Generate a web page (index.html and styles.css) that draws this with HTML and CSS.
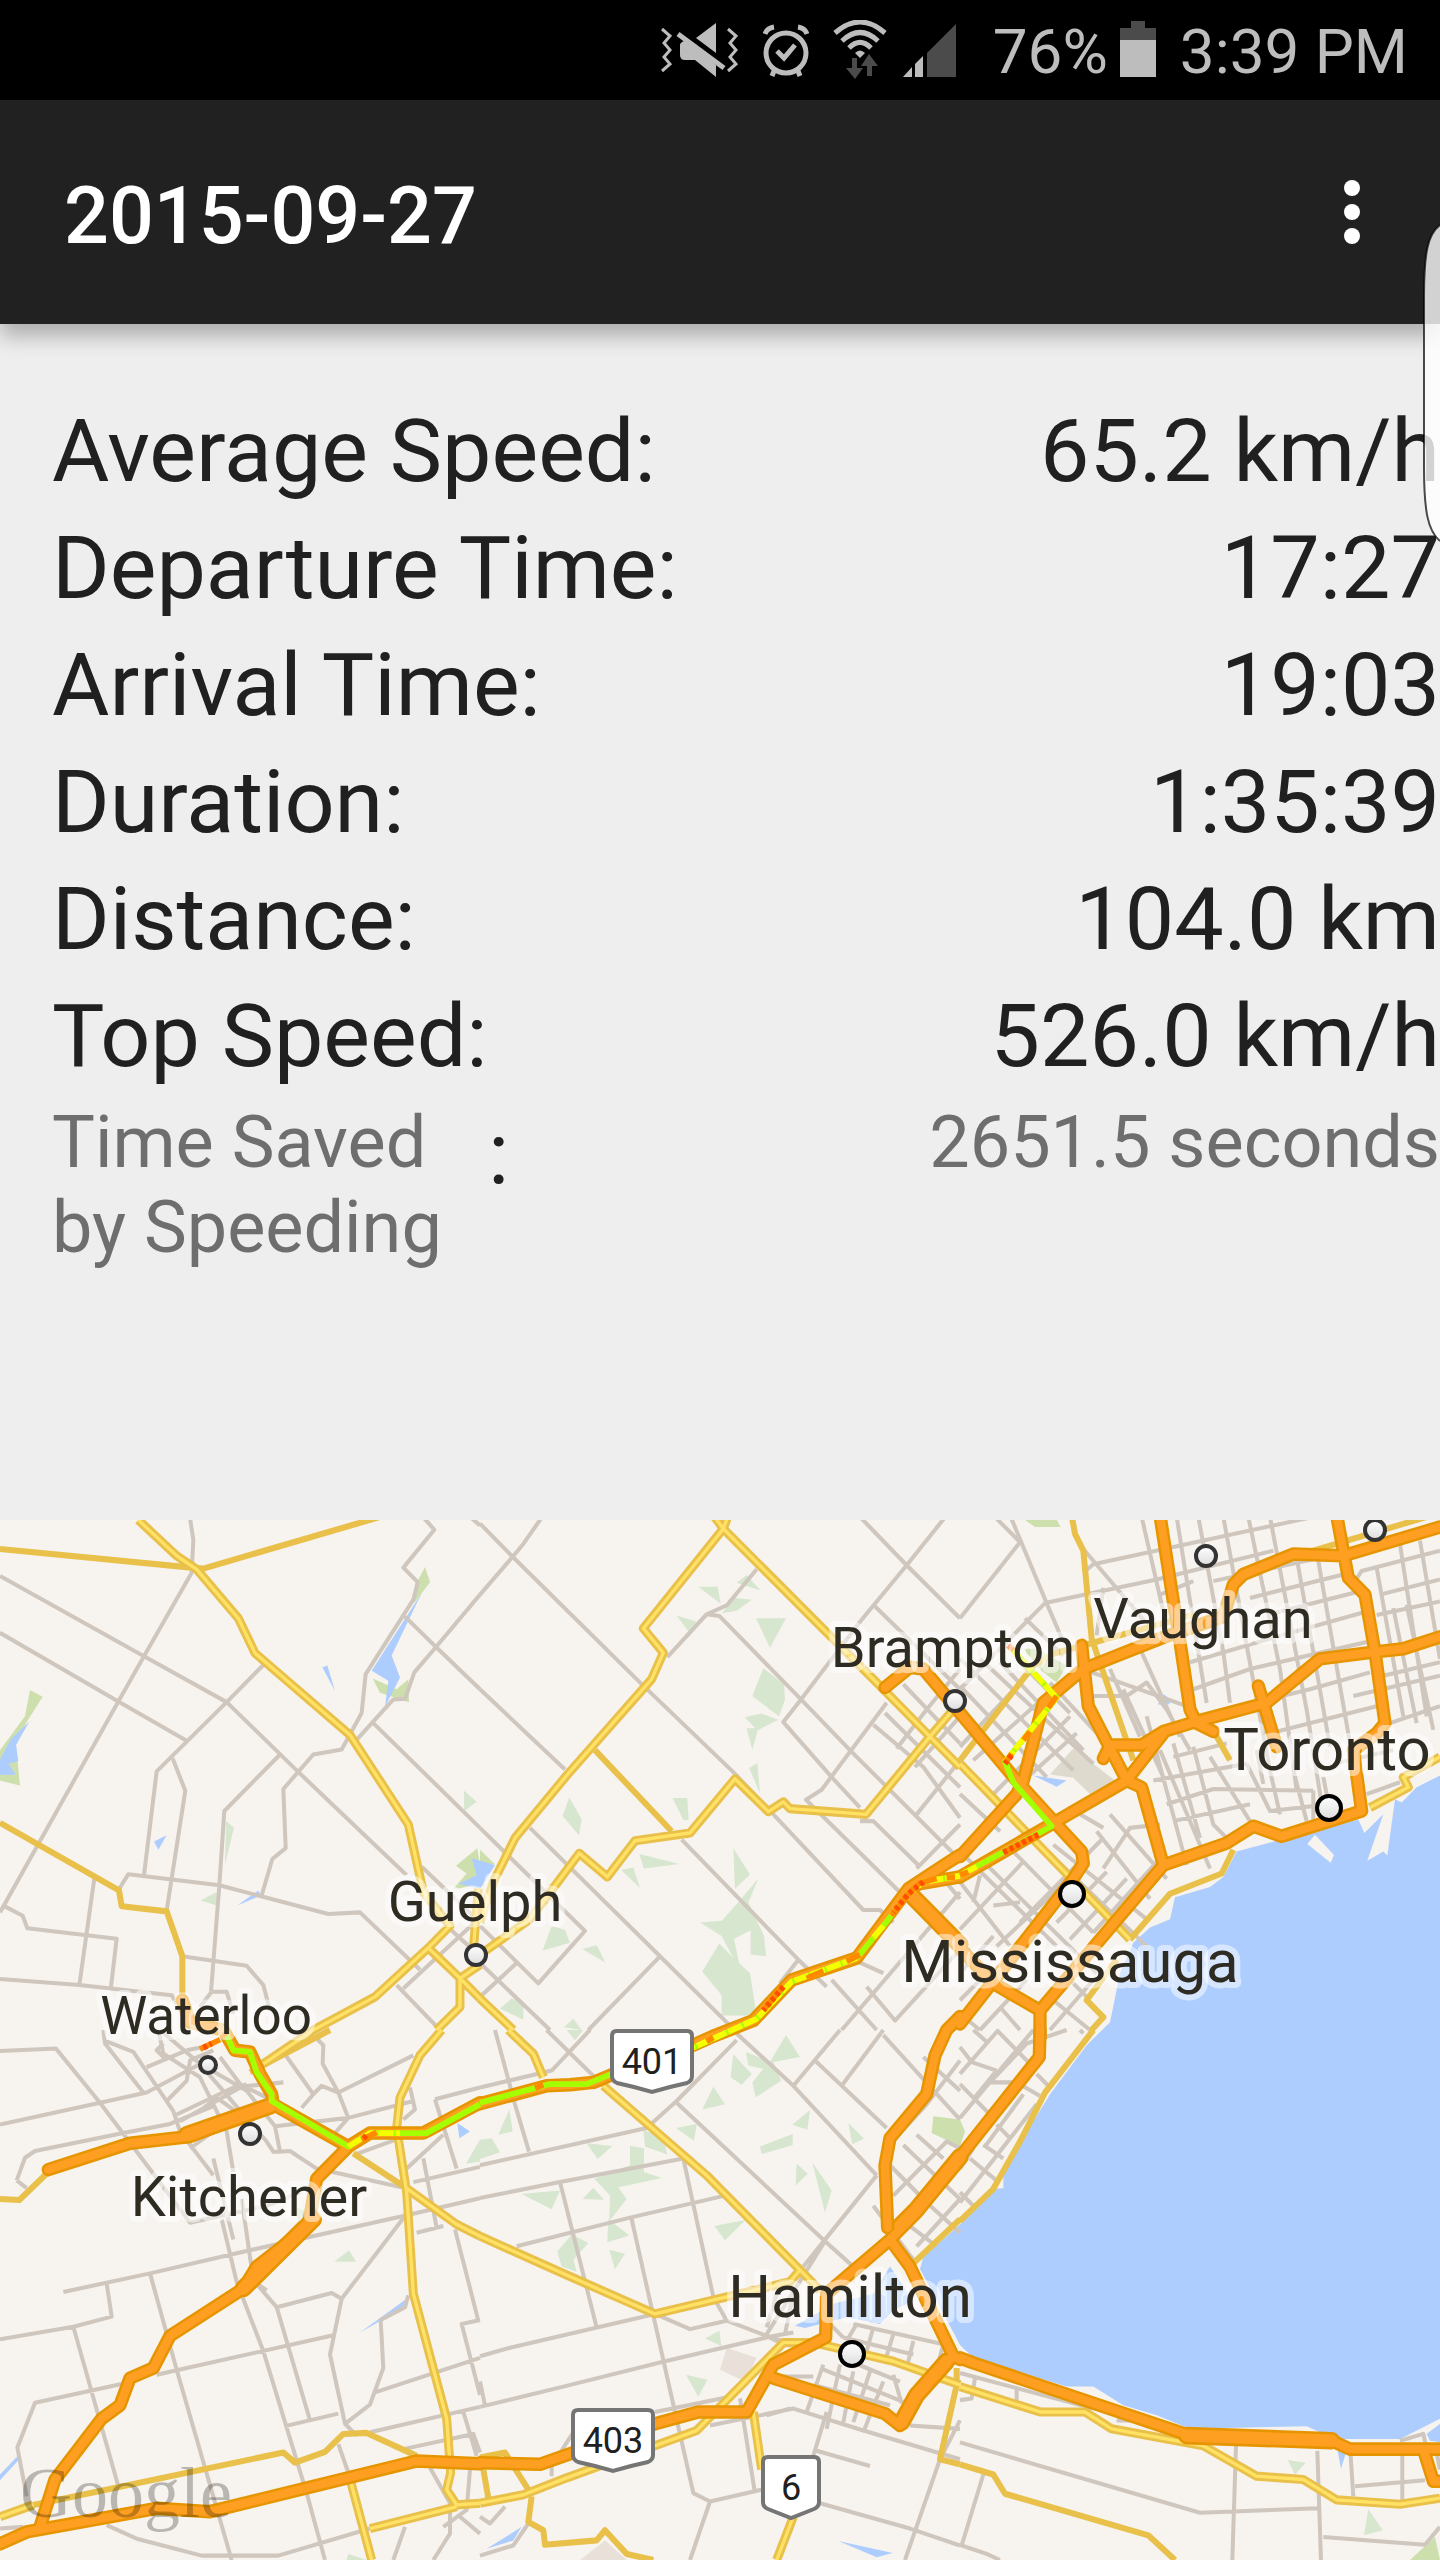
FILE: index.html
```html
<!DOCTYPE html>
<html lang="en">
<head>
<meta charset="utf-8">
<meta name="viewport" content="width=device-width, initial-scale=1">
<title>2015-09-27</title>
<link rel="stylesheet" href="styles.css">
</head>
<body>
<div class="status-bar">
  <svg class="status-icon" width="78" height="60" viewBox="0 0 78 60" role="img" aria-label="Vibrate">
    <path class="line thin" d="M1 9L9 16L3 23L9 30L3 37L9 44L1 51M67 9L75 16L69 23L75 30L69 37L75 44L67 51"/>
    <path class="lit" d="M55 3V33L35 18ZM26 20L55 45V57L34 40H24Q19 40 19 35V25Q19 22 26 20Z"/>
    <path class="gap" d="M20 10L66 45"/>
    <path class="line" d="M17 14L63 48"/>
  </svg>
  <svg class="status-icon" width="46" height="60" viewBox="0 0 46 60" role="img" aria-label="Alarm">
    <circle class="line" cx="23" cy="33" r="20"/>
    <path class="line" d="M14 31L21 38L32 25M2 14Q4 8 11 7M44 14Q42 8 35 7M11 51L9 56M35 51L37 56"/>
  </svg>
  <div class="network">
    <svg class="status-icon" width="54" height="60" viewBox="0 0 54 60" role="img" aria-label="Wi-Fi">
      <path class="line" d="M2 13Q27 -9 52 13M9 21Q27 4 45 21M16 28Q27 17 38 28"/>
      <path class="lit" d="M22 33Q27 28 32 33L27 38Z"/>
      <path class="dim" d="M19 38H24V48H30L22 59L13 48H19ZM34 56V46H28L36 34L45 46H39V56Z"/>
    </svg>
    <svg class="status-icon" width="54" height="60" viewBox="0 0 54 60" role="img" aria-label="Signal">
      <path class="lit" d="M0 57L9 47V57ZM12 57V44L20 36V57Z"/>
      <path class="dim" d="M24 57V33L53 4V57Z"/>
    </svg>
  </div>
  <div class="battery">
    <span class="status-text">76%</span>
    <svg class="status-icon" width="36" height="60" viewBox="0 0 36 60" role="img" aria-label="Battery">
      <path class="dim" d="M11 1H25V8H36V20H0V8H11Z"/>
      <path class="lit" d="M0 20H36V57H0Z"/>
    </svg>
  </div>
  <span class="status-text">3:39 PM</span>
</div>

<header class="app-bar">
  <h1 class="title">2015-09-27</h1>
  <button class="menu-button" type="button" aria-label="More options">
    <svg width="16" height="64" viewBox="0 0 16 64"><circle cx="8" cy="8" r="8"/><circle cx="8" cy="32" r="8"/><circle cx="8" cy="56" r="8"/></svg>
  </button>
  <svg class="edge-handle" width="20" height="322" viewBox="0 0 20 322" aria-hidden="true">
    <path class="edge-fill" d="M20 3C8 12 4 30 4 75V245C4 290 8 309 20 319Z"/>
    <path class="edge-line" d="M20 3C8 12 4 30 4 75V245C4 290 8 309 20 319"/>
  </svg>
</header>

<main>
  <section class="stats">
    <table class="stats-table">
      <tr><th scope="row">Average Speed:</th><td>65.2 km/h</td></tr>
      <tr><th scope="row">Departure Time:</th><td>17:27</td></tr>
      <tr><th scope="row">Arrival Time:</th><td>19:03</td></tr>
      <tr><th scope="row">Duration:</th><td>1:35:39</td></tr>
      <tr><th scope="row">Distance:</th><td>104.0 km</td></tr>
      <tr><th scope="row">Top Speed:</th><td>526.0 km/h</td></tr>
      <tr><th scope="row"><span class="saved-label"><span class="minor-text saved-name">Time Saved by Speeding</span><span>:</span></span></th><td><span class="minor-text">2651.5 seconds</span></td></tr>
    </table>
  </section>

  <svg class="map" viewBox="0 1520 1440 1040" role="img" aria-label="Map of the trip from Waterloo to Brampton">
    <defs>
      <linearGradient id="pin" x1="0" y1="0" x2="0" y2="1"><stop offset="0" stop-color="#fff"/><stop offset="1" stop-color="#ddd"/></linearGradient>
      <g id="arterial">
        <path d="M415 59L530 165L590 205L715 350L765 453L1050 695L1225 960L1270 1160L1350 1260L1285 1325L1125 1470L940 1568L790 1668M1285 1325L1380 1415L1440 1475M1440 1375L1380 1415V1500L1310 1568M1435 1150L1420 1330"/>
        <path transform="translate(1440 0)" d="M700 45L730 85L490 380L550 452L515 530L260 815L105 1000L40 1130L0 1250M745 45L730 85L1210 560L1350 700L1440 790M0 1345L150 1240L298 1045L382 1115L465 1008L630 985L765 825L865 922L910 893L930 913L1158 930L1350 700L1420 620M0 1475L100 1568"/>
        <path transform="translate(2880 0)" d="M0 780L510 1300M1230 910L1345 850L1330 820L1440 760"/>
        <path transform="translate(0 1568)" d="M1325 0L1260 75L1200 200L1190 290L1220 480L1240 780L1340 1150L1352 1310L1340 1360L1370 1405L1440 1400M1215 465L1370 575L1440 610M1110 1475L1370 1410M1045 1310L1115 1568M0 1440L100 1405"/>
        <path transform="translate(1440 1568)" d="M85 0L160 70L190 140M370 165L680 430L960 710L1020 770M960 710L930 745L525 840L260 725L0 610M0 1400L130 1375L260 1325L650 1185L910 925H1000L1240 980L1440 1050M820 1130L845 1300M940 1440L890 1568"/>
        <path transform="translate(2880 1568)" d="M0 1055L240 1130H375L455 1180L730 1230L890 1320L1030 1330L1130 1390L1320 1403L1440 1385"/>
      </g>
      <g id="highway">
        <path d="M547 1480L570 1545L670 1568"/>
        <path transform="translate(1440 0)" d="M1215 555L1290 495L1330 500L1440 630M1440 1050L1400 1075L1285 1150L1130 1355L935 1420L820 1540L700 1586L640 1613M1285 1150L1320 1135L1440 1115"/>
        <path transform="translate(2880 0)" d="M0 630L170 830L290 960L365 1040L370 1075L340 1120L0 1550M0 1055L170 870L190 830L250 600L370 500L600 410L790 345L820 250L850 220L1000 160L1150 165L1440 80M365 430L385 610L500 830L545 850L610 1080M600 45L640 300L660 420L690 620L710 660M1130 45L1165 230L1215 280L1245 450L1275 660L1250 690L1180 740L1205 920M430 765L450 725L545 725L610 685L710 655L920 600L1080 470L1240 450L1330 440L1440 405M610 690L500 830L290 950L0 1115M895 550L950 730M710 660L760 685M1205 920L965 995L880 965L800 1015L610 1080L240 1510V1590M-150 1170L100 1430L240 1510"/>
        <path transform="translate(0 1568)" d="M145 413L390 335L570 315L820 220M670 0L705 60L750 65L780 130L815 190L820 220L1045 345L1110 305H1270L1440 215M1045 345L950 440L925 580L770 700L730 765L510 905L460 1000L390 1030L360 1110L305 1150L165 1330L120 1470M0 1520L80 1485L470 1415L630 1425L1250 1275L1440 1283"/>
        <path transform="translate(1440 1568)" d="M1440 -40L1400 0L1365 75L1340 190L1230 320L1215 400L1223 585M0 218L200 165L270 162L340 155L450 110M1440 380L1310 540L1230 620L1040 780L1037 910L880 990L800 1130H655L525 1165L180 1285L0 1280M1230 620L1290 700L1420 965L1310 1080L1260 1170L1215 1135L880 1030M1420 965L1440 975"/>
        <path transform="translate(2880 1568)" d="M240 0L238 80L0 375M0 970L40 985L690 1200L1115 1215L1170 1240H1450M1390 1240L1420 1335H1450"/>
      </g>
      <g id="wide-highway">
        <path transform="translate(1440 0)" d="M1300 1175L1440 1315"/>
        <path transform="translate(0 1568)" d="M560 310L810 225M940 560L730 765"/>
        <path transform="translate(1440 1568)" d="M1440 375L1310 530L1260 580M1400 980L1310 1080L1265 1160"/>
        <path transform="translate(2880 1568)" d="M680 1200L1115 1215"/>
      </g>
      <g id="trip">
        <path transform="translate(2880 0)" d="M150 435L290 585L135 775L160 835L275 965L190 1010L0 1110"/>
        <path transform="translate(1440 0)" d="M1440 1112L1330 1130L1285 1165L1210 1260L1130 1355L935 1425L830 1535L640 1620"/>
        <path transform="translate(1440 1568)" d="M395 130L320 160H210L0 215"/>
        <path transform="translate(0 1568)" d="M675 5L700 60L750 65L770 125L815 190V210L960 295L1045 345L1110 305H1280L1440 220"/>
      </g>
    </defs>

    <rect class="land" x="0" y="1520" width="1440" height="1040"/>
    <g transform="translate(0 1500) scale(.33333 .33801)">
      <g class="woods">
        <path d="M1392 860L1430 893L1392 920ZM678 950L702 970L675 1080ZM602 1185L650 1160V1200Z"/>
        <path transform="translate(1440 0)" d="M655 257H713L722 307ZM725 335L765 290L815 295L770 328ZM770 245L800 222L842 268ZM590 342L650 360L625 388ZM828 350H918L870 437ZM850 498L912 545L915 590L897 640L817 580ZM795 643L845 632L895 650L832 682ZM800 675H835L817 738ZM808 793L832 778L840 868ZM578 882H622L626 947H610ZM268 880L305 945L297 992L248 935ZM478 1047L598 1077L492 1090ZM424 1095L460 1087L480 1148ZM760 1030L810 1108L765 1150ZM835 1120L805 1190L852 1290L858 1350L812 1345V1273L762 1298L777 1370L810 1400L830 1525H725V1465L667 1395L718 1312L760 1355L725 1290L660 1250L725 1245L775 1190ZM215 1260L255 1272L270 1310L188 1333ZM307 1328L350 1317L376 1368ZM60 1505L95 1475L130 1485V1537ZM252 1560L280 1535L305 1568Z"/>
        <path transform="translate(1440 1568)" d="M260 0H310L285 30ZM55 310L88 235L98 300ZM0 325L35 320L60 362L0 382ZM760 72L815 130L785 162L752 140ZM798 65L870 95L918 15L960 80L880 95L903 150L827 200L817 155L850 115L805 105ZM667 235L700 168L735 220ZM588 290L650 278L642 328ZM490 295L550 320L562 368L495 345ZM320 335L397 343L353 382ZM450 343L492 350V420L545 438L415 465L440 500L388 565L390 490L343 440L450 400ZM308 500L340 467L372 502ZM125 485L240 475L215 530ZM385 560L448 608L382 628ZM275 605L325 630L280 680L290 715L245 700L232 655ZM388 650L435 662L405 708ZM703 580L797 562L735 622ZM840 345L938 308V340L845 367ZM937 280L990 237L982 295ZM950 395L983 425L947 460ZM997 392L1055 475L1035 540ZM1105 275L1152 322L1117 338ZM675 913L718 890L724 935ZM618 1020L682 1035L655 1085Z"/>
        <path transform="translate(0 1568)" d="M1440 325L1398 395L1440 390ZM1003 685L1047 652L1068 686ZM885 520L920 540L895 570ZM1045 1550L1100 1568H1040Z"/>
        <path transform="translate(2880 1568)" d="M983 1272L1037 1280L1005 1315ZM1225 1418L1268 1480L1212 1495Z"/>
      </g>
      <g class="park">
        <path d="M1275 198L1290 243L1243 305L1253 240ZM1118 528L1190 560L1225 530L1227 598L1140 570ZM90 562L128 582L78 660L48 725L60 845L0 830V740L75 640ZM1368 1082L1432 1030L1450 1140L1360 1150L1400 1105Z"/>
        <path transform="translate(1440 0)" d="M0 1035L45 1078H0Z"/>
        <path transform="translate(2880 0)" d="M195 59H290L302 80H225ZM190 440H230L320 490L290 540L245 505Z"/>
        <path transform="translate(1440 1568)" d="M1360 255L1440 265L1455 300L1440 345L1355 305Z"/>
        <path transform="translate(2880 1568)" d="M1350 1568L1425 1500L1440 1568Z"/>
      </g>
      <g class="built">
        <path transform="translate(2880 0)" d="M270 812L340 735L465 830L390 870L340 822Z"/>
        <path class="sand" transform="translate(1440 1568)" d="M740 940L830 970L795 1040L720 1005ZM300 1568L375 1510L440 1568Z"/>
      </g>
      <g class="water">
        <path d="M1265 275L1175 460L1200 525L1155 612L1165 535L1115 505ZM967 495L982 490L1005 565ZM88 655L48 725L55 772L25 780L48 813H0V768L35 705ZM462 1010L500 992L475 1035ZM712 1200L775 1155L782 1170ZM1415 1060L1485 1080L1440 1150L1375 1135L1430 1110Z"/>
        <path transform="translate(2880 0)" d="M1440 815L1370 850L1325 895L1305 885L1282 1052L1270 1040L1222 1067L1270 930L1213 985L1195 945L960 1005L830 1040L790 1115L750 1145L645 1175L630 1240L570 1265L520 1310L480 1400L450 1545L380 1613L270 1758L170 1918L130 1998V2036L100 2038L0 2143L-110 2240L-120 2275L0 2500L40 2538L320 2623H400L490 2678L590 2708L690 2748L1040 2740L1080 2758L1150 2778H1320L1440 2718ZM220 815L320 830L290 848ZM593 605L612 575L635 595L625 605Z"/>
        <path transform="translate(0 1568)" d="M1372 275L1410 300L1378 320ZM1080 895L1220 795L1205 825ZM0 1315L50 1263L58 1270L0 1332Z"/>
        <path transform="translate(1440 1568)" d="M945 875L1060 810L1180 780L1230 700L1300 800L1240 830L1200 870L1100 850L975 882ZM20 1535L125 1470L100 1510ZM1075 1512L1238 1547L1190 1560Z"/>
        <path transform="translate(2880 1568)" d="M1133 1245L1158 1250L1143 1298ZM1400 1195L1440 1165V1220L1410 1215Z"/>
      </g>
      <path class="land" transform="translate(2880 0)" d="M1065 990L1122 1050L1112 1073L1042 1018Z"/>

      <g class="minor-road">
        <path d="M568 40L580 118L575 215L432 462L355 596L0 1220M0 225L432 462L680 598L890 800L1220 1110M0 393L355 596L560 712M790 488L680 598L470 803L432 1110M518 765L556 860L500 1215M838 755L673 920L658 1140L633 1455M358 1150L385 1107L658 1140L985 1225L1080 1220L1260 1390M785 1170L817 1062L857 1030L850 855L940 753L1025 738L1085 630L1097 515L1240 295L1253 243L1210 200L1303 88L1260 40M1440 280L1308 435L1243 510L1215 588L1180 590L1065 715M1215 345L1308 435L1440 560M1120 660L1440 970M283 1120L238 1435M10 1200L68 1230L82 1267L350 1298L333 1440M0 1417L238 1435L515 1465L530 1490M547 1350L740 1378L790 1435L810 1510M1410 50L1440 75M1265 1085L1440 1250M1190 1435L1320 1568M1440 1235L1210 1445M600 1500L635 1455L680 1455L700 1520M1345 1265L1440 1350"/>
        <path transform="translate(1440 0)" d="M0 70L98 168L475 535L760 805L880 930L1150 1213H1200L1240 1250M190 45L130 130L98 168L0 280M0 560L255 797M150 970L540 1350L750 1555M0 970L315 1275L175 1430L0 1260M830 205L740 312L680 338L562 465M680 338L718 343L963 590L1115 745L1440 1065M1140 50L1280 193L1440 350M1400 45L1280 193L1140 360L963 590L910 657L1055 820L1140 910M1220 600L1025 857L978 887L1270 1170M1140 950H1180L1320 1085M605 1005L955 1360L1040 1440M540 1350L325 1568M955 1360L900 1430M1215 630L1440 850M1180 665L1330 790L1440 940M1310 930L1440 770M1440 960L1310 1090M1270 545L1440 720M1250 735L1340 620L1440 500M0 1370L210 1568M0 1470L110 1370M1055 1420L1190 1568M1085 1568L1440 1160M1160 1440L1245 1540L1440 1330M1120 1360L1210 1400M1180 310L1440 560M1305 790L1440 640M1380 1110L1440 1180"/>
        <path transform="translate(2880 0)" d="M100 45L180 125L0 350M150 45L260 305L310 420M370 145L555 360M370 215L400 190L1060 50M255 305L590 235L940 150M255 305L0 560M195 350L310 460M545 50L610 330M650 50L700 360L740 600M715 50L790 450L810 600M790 50L860 430L930 800L960 930M865 50L960 500L1010 860M930 50L1040 620L1090 930M1010 170L1110 730M1075 180L1170 720M1185 240L1205 210L1440 150M760 240L1130 160M870 290L1170 215M920 340L1200 270M690 480L930 410L1220 330M700 560L870 500L1220 420M800 620L1050 560L1230 510M930 690L1250 610M1180 580L1440 520M1260 280L1440 235M1250 340L1440 300M1270 520L1440 480M1290 660L1440 610M1250 200L1330 640M1320 130L1340 260L1400 640M1380 120L1440 470M1300 320L1370 660M1340 310L1420 680M560 640L680 1080M600 740L750 1090M640 720L720 1000M700 730L760 960L810 1010M750 760L870 950M640 760L800 720M580 830L860 780M620 900L760 855L1060 860M640 950L870 900M860 780L930 920L1060 905M1060 860V950M1090 820L1110 920M1000 800L1040 950M890 740L910 840M1120 780L1300 740M1220 870L1320 835M600 960L510 970L430 1090M395 510L680 610M400 580H500L560 540L620 620L690 740M490 560L610 820M450 500L540 700M540 440L660 700M700 240L600 280M430 260L410 400"/>
        <path transform="translate(2880 0)" d="M0 470L340 800M0 550L260 820M60 470L400 780M120 480L370 740M180 480L330 630M0 730L210 510M40 770L280 560M90 880L330 640M180 840L350 690M270 540L420 700M0 870L120 980M0 1130L150 1320M0 1040L290 1320M60 1060L410 1400M150 1030L400 1280M210 990L560 1320M280 1020L560 1240M0 1270L190 1070M40 1190L60 1110M110 1320L370 1080M0 1400L100 1290M180 1250L430 1000M290 1250L440 1100M330 1300L500 1120M400 1280L600 1060M410 980L570 1180M450 930L620 1120M340 1120L440 1240M0 1480L90 1390M60 1568L200 1420M0 1520L60 1568M120 1500L180 1568M280 1480L390 1568M330 1420L380 1470M270 1568L400 1420M360 930L430 970M100 1200L180 1190"/>
        <path transform="translate(0 1568)" d="M0 62L168 55L300 215L460 425L570 570L800 520L900 480M0 280L300 215L440 185L640 80M0 915L220 878L335 848L320 750M190 775L450 720L690 665L1210 550L1440 498M50 445L75 378L105 358L370 305L510 278L640 225M50 445L80 468M450 720L530 1005L695 1568M220 878L355 1350M665 560L710 745L790 950L920 1370L975 1568M725 500L760 740L830 820L930 1155M830 820L995 778L1025 795L1215 550M1025 795L990 960L1035 1165L1110 1108L1150 1000L1142 858L1215 820L1225 785M470 1020L1000 903M375 1045L105 1103L52 1235L80 1380M855 1172L1015 1135M1035 1165L1070 1200M1015 1225L1045 1310M1125 1072L1440 970M1110 1190L1440 1115M1210 1240L1420 1195L1440 1250M1440 858L1385 870L1440 1080M1390 1130L1430 1260M0 1475L70 1470M320 1465L410 1505L605 1555H835L1110 1475M1440 405L1240 450M1250 600L1330 580M1240 210L1045 260L825 285L840 360L870 358L950 410L1205 465M825 285L740 180L600 100L480 0M310 0L315 40L430 185M310 30L400 65L520 240L540 300L640 430M475 0L490 70L600 140L680 300L700 420M440 110L560 60M500 210L560 150L570 90L640 60M530 250L700 170L850 155M570 350L640 300M540 270L740 160M560 60L610 50M600 240L650 200L720 250M600 100L800 330L820 360L840 360M660 80L720 160L800 200M850 65L940 190L905 230M940 190L965 165L1015 185L1240 75M950 25L970 45L968 100L1015 185L1045 260L1000 310M1230 170L1245 235L1210 265M1305 205L1440 170M1305 205L1370 410M1060 370L1200 320M1220 410L1330 310M1270 380L1310 585M1365 590L1435 860M700 620L640 380M490 40L470 60L500 90M1290 1295L1350 1400V1490L1300 1568M1380 1440L1440 1490M1215 1470L1180 1568M1410 1300L1400 1420L1330 1470M770 750L800 770"/>
        <path transform="translate(1440 1568)" d="M45 0L105 220L147 360M0 170L215 120L330 0M200 0L370 165M0 400L500 290L590 210L770 30M0 497L240 450L610 380M110 640L450 555L735 490M240 450L350 880M455 560L585 1130L640 1370L690 1395L890 1350M610 380L700 790L740 860L860 905M770 10L940 165L1190 430M590 215L1035 625L1120 700M1080 0L940 165M1210 0L1085 165M1005 90L1220 290M1210 15L1380 200L1440 265M1190 430L970 700M1440 90L1340 220L1210 360M1440 180L1330 80M0 965L90 940L525 840L630 885L740 860M0 1115L250 1055L555 980L880 905L940 895M0 1040L15 1110M525 1130L750 1085M690 1170L940 1120L1150 1185L1440 1270M780 1090L825 1370M860 1140L930 1120M1010 1245L1170 1290M1040 1130L1000 1260M1440 1180L1290 1170M1440 1155L1380 1270L1275 1568M1020 1400L1290 1475L1440 1525M690 1395L630 1568M0 1440L30 1460L75 1410M0 1555L100 1525L145 1460M215 1320V1290L280 1190M860 905L940 930M860 880L890 780M915 900L940 780M1035 625L860 900"/>
        <path transform="translate(1440 1568)" d="M1120 870L1390 930M1090 910L1300 960M1110 980L1260 1040M1130 870L1100 920M1180 880L1160 950M1240 900L1215 980M1300 920L1280 1000M1390 930L1360 1040M1020 1000L1270 1100M1000 1050L1230 1110M1030 990L980 1130M1080 990L1040 1180M1120 1010L1090 1160M1170 1010L1120 1160M1210 1040L1150 1190M1240 1020L1265 1105M910 1025H1000M1230 400L1350 520M1270 340L1440 500M1310 310L1390 380M1240 490L1400 330L1440 350M1270 560L1440 400M1180 520L1300 680M1310 640L1440 500M1290 580L1370 640M1340 510L1440 600M1250 620L1310 690M1030 850L1090 910M860 905L910 930"/>
        <path transform="translate(2880 1568)" d="M0 260L220 0M0 160L90 250M40 0L80 35M0 130L115 0M0 50L35 95L110 120M110 0L220 110M90 155L200 40L320 0M40 205L110 120M0 410L40 350M0 510L230 220M0 480L40 520M30 380L115 450M75 345L190 190M90 155H170L240 195M150 320L110 280M230 130L270 170M360 0L370 10M70 340L130 380M0 1015L400 1120M0 1220L720 1428L1075 1415M828 1230L817 1568M1072 1245L1083 1568M1172 1260L1180 1380M1185 1350L1395 1332M1327 1260V1390M1090 1500L1395 1523L1440 1470M70 1315L5 1525L80 1550L120 1568M470 1155H530M170 1060V1100M45 1030L35 1090L0 1095M1320 1215L1390 1195L1400 1240M1430 1250L1440 1300"/>
      </g>
      <g class="regional-road">
        <path d="M0 145L575 200L610 203L1140 50M0 955L357 1155L365 1202L500 1217L547 1350V1500"/>
        <path transform="translate(1440 0)" d="M345 740L575 980"/>
        <path transform="translate(2880 0)" d="M335 45L345 100L370 150L395 410L440 540L520 770M1060 150L1400 50M0 770L220 490L280 455L700 340M510 1300L630 1165L785 1105L820 1035M770 700L810 770M470 1360L380 1480L430 1530L395 1568"/>
        <path transform="translate(0 1568)" d="M990 0L750 125M0 500L58 503L145 420M1060 365L1215 465M100 1405L850 1250L885 1280L975 1248L1030 1195L1100 1192L1250 1260"/>
        <path transform="translate(1440 1568)" d="M0 1265L75 1250L145 1360M10 1300L25 1385M155 1380L145 1455L190 1480L195 1523L350 1510L375 1480L440 1550L520 1568M1300 690L1440 560M1430 1000V1050L1380 1270L1440 1285"/>
        <path transform="translate(2880 1568)" d="M400 0L255 185L180 330L100 470L0 565M0 1285L100 1315L135 1372L565 1495L645 1568"/>
      </g>
      <use href="#arterial" class="arterial-edge"/>
      <use href="#arterial" class="arterial-core"/>
      <use href="#highway" class="highway-edge"/>
      <use href="#wide-highway" class="wide-edge"/>
      <use href="#highway" class="highway-core"/>
      <use href="#wide-highway" class="wide-core"/>
      <use href="#trip" class="trip-base"/>
      <g class="trip-yellow">
        <path transform="translate(2880 0)" d="M150 435L290 585L135 775M50 1085L0 1110"/>
        <path transform="translate(1440 0)" d="M1440 1112L1330 1130L1285 1165M1210 1260L1180 1295M1130 1355L935 1425L830 1535L640 1620"/>
        <path transform="translate(0 1568)" d="M1045 345L1110 305H1200"/>
      </g>
      <g class="trip-orange">
        <path transform="translate(2880 0)" d="M145 430L160 445M290 580L265 615M210 685L190 710M155 750L135 780M235 990L130 1043M25 1100L0 1110"/>
        <path transform="translate(1440 0)" d="M1425 1115L1400 1117M1370 1120L1320 1133L1285 1165L1235 1230M1140 1345L1100 1365M1030 1393L980 1415M910 1440L850 1510M700 1590L680 1602"/>
        <path transform="translate(0 1568)" d="M600 57L660 28M1085 325L1130 303M670 5L680 18"/>
        <path transform="translate(1440 1568)" d="M190 162L165 172"/>
      </g>
      <g class="trip-red">
        <path transform="translate(2880 0)" d="M145 430L160 445M155 755L135 780M235 990L130 1043"/>
        <path transform="translate(1440 0)" d="M1330 1130L1285 1165L1240 1220M910 1440L850 1510"/>
        <path transform="translate(0 1568)" d="M610 52L635 40M1090 320L1100 312"/>
      </g>
    </g>

    <g class="pins">
      <circle cx="476" cy="1955" r="10"/><circle cx="1206" cy="1556" r="10"/><circle cx="1375" cy="1530" r="10"/><circle cx="955" cy="1701" r="10"/><circle cx="208" cy="2065" r="8"/><circle cx="250" cy="2134" r="10"/>
      <g class="major"><circle cx="1329" cy="1808" r="12"/><circle cx="1072" cy="1894" r="12"/><circle cx="852" cy="2354" r="12"/></g>
    </g>
    <g class="shields">
      <path d="M617 2031H687Q692 2031 692 2036V2076Q692 2081 687 2083L670 2087L652 2092L634 2087L617 2083Q612 2081 612 2076V2036Q612 2031 617 2031Z"/>
      <path d="M578 2410H648Q653 2410 653 2415V2455Q653 2460 648 2462L631 2466L613 2471L595 2466L578 2462Q573 2460 573 2455V2415Q573 2410 578 2410Z"/>
      <path d="M768 2457H814Q819 2457 819 2462V2502Q819 2507 814 2509L791 2518L768 2509Q763 2507 763 2502V2462Q763 2457 768 2457Z"/>
      <text x="652" y="2074">401</text><text x="613" y="2453">403</text><text x="791" y="2500">6</text>
    </g>
    <g class="cities">
      <text x="1203" y="1638">Vaughan</text>
      <text x="953" y="1667">Brampton</text>
      <text x="475" y="1921">Guelph</text>
      <text class="small" x="206" y="2034">Waterloo</text>
      <text x="249" y="2216">Kitchener</text>
      <text class="big" x="1327" y="1770">Toronto</text>
      <text class="big" x="1070" y="1982">Mississauga</text>
      <text class="big" x="850" y="2317">Hamilton</text>
    </g>
    <text class="attribution" x="20" y="2517">Google</text>
  </svg>
</main>
</body>
</html>
```
FILE: styles.css
```css
* { box-sizing: border-box; }

body {
  margin: 0;
  background: #eee;
  color: #202020;
  font-family: Roboto, sans-serif;
}

/* Status bar */
.status-bar {
  display: flex;
  justify-content: flex-end;
  align-items: center;
  gap: 24px;
  height: 100px;
  padding-right: 32px;
  background: #000;
  color: #bdbdbd;
}
.network { display: flex; gap: 16px; }
.battery { display: flex; align-items: center; gap: 12px; margin-left: 12px; }
.status-icon { display: block; flex: none; }
.status-text { padding-top: 4px; font-size: 62px; line-height: 76px; white-space: nowrap; }
.lit { fill: #bdbdbd; }
.dim { fill: #4b4b4b; }
.line { fill: none; stroke: #bdbdbd; stroke-width: 5; }
.thin { stroke-width: 3; }
.gap { fill: none; stroke: #000; stroke-width: 4; }

/* App bar */
.app-bar {
  position: relative;
  display: flex;
  align-items: center;
  justify-content: space-between;
  height: 224px;
  padding: 0 64px;
  background: #212121;
  color: #fff;
  box-shadow: 0 12px 20px rgba(0, 0, 0, .28);
}
.title { margin: 0; padding-top: 8px; font-size: 79px; line-height: 96px; font-weight: 500; }
.menu-button {
  display: flex;
  justify-content: center;
  width: 48px;
  padding: 0;
  border: 0;
  background: none;
}
.menu-button svg { fill: #fff; }
.edge-handle { position: absolute; right: 0; top: 122px; }
.edge-fill { fill: rgba(255, 255, 255, .8); }
.edge-line { fill: none; stroke: rgba(0, 0, 0, .7); stroke-width: 2; }

/* Trip figures */
.stats { padding: 68px 0 250px 52px; }
.stats-table {
  width: 100%;
  border-collapse: collapse;
  font-size: 88px;
  line-height: 117px;
}
.stats-table th, .stats-table td {
  padding: 0;
  font-weight: 400;
  vertical-align: top;
  white-space: nowrap;
}
.stats-table th { text-align: left; }
.stats-table td { text-align: right; }
.minor-text {
  display: block;
  padding-top: 6px;
  color: #6e6e6e;
  font-size: 72px;
  line-height: 85px;
}
.saved-label { display: flex; }
.saved-name { width: 436px; white-space: normal; }

/* Map */
.map { display: block; width: 100%; height: auto; }
.land { fill: #f7f3ee; }
.woods { fill: #d6e6cf; }
.park { fill: #cddfad; }
.water { fill: #aecdff; }
.built { fill: #dedacd; }
.sand { fill: #e9e1d9; }
.minor-road, .regional-road, .arterial-edge, .arterial-core,
.highway-edge, .highway-core, .wide-edge, .wide-core,
.trip-base, .trip-yellow, .trip-orange, .trip-red {
  fill: none;
  stroke-linejoin: round;
}
.minor-road { stroke: #cfc6bd; stroke-width: 12; }
.regional-road { stroke: #e8c04a; stroke-width: 18; }
.arterial-edge { stroke: #e8c04a; stroke-width: 27; }
.arterial-core { stroke: #ffe164; stroke-width: 10; }
.highway-edge { stroke: #e69500; stroke-width: 40; stroke-linecap: round; }
.highway-core { stroke: #ff9f22; stroke-width: 25; stroke-linecap: round; }
.wide-edge { stroke: #e69500; stroke-width: 52; stroke-linecap: round; }
.wide-core { stroke: #ff9f22; stroke-width: 36; stroke-linecap: round; }
.trip-base { stroke: #a4ff00; stroke-width: 17; }
.trip-yellow { stroke: #f4ff00; stroke-width: 17; stroke-dasharray: 45 6; }
.trip-orange { stroke: #ff8a00; stroke-width: 17; }
.trip-red { stroke: #ff4d00; stroke-width: 17; stroke-dasharray: 12 9; }
.pins { fill: url(#pin); stroke: #333; stroke-width: 4; }
.major { stroke: #000; }
.shields path { fill: #fff; stroke: #757575; stroke-width: 4; }
.shields text { fill: #202020; font-size: 36px; text-anchor: middle; }
.cities text {
  fill: #2e2b23;
  stroke: rgba(255, 255, 255, .5);
  stroke-width: 12;
  stroke-linejoin: round;
  paint-order: stroke;
  font-size: 56px;
  text-anchor: middle;
}
.cities .small { font-size: 53px; }
.cities .big { font-size: 60px; }
.attribution {
  fill: rgba(0, 0, 0, .25);
  font-family: "Liberation Serif", serif;
  font-size: 72px;
}
```
